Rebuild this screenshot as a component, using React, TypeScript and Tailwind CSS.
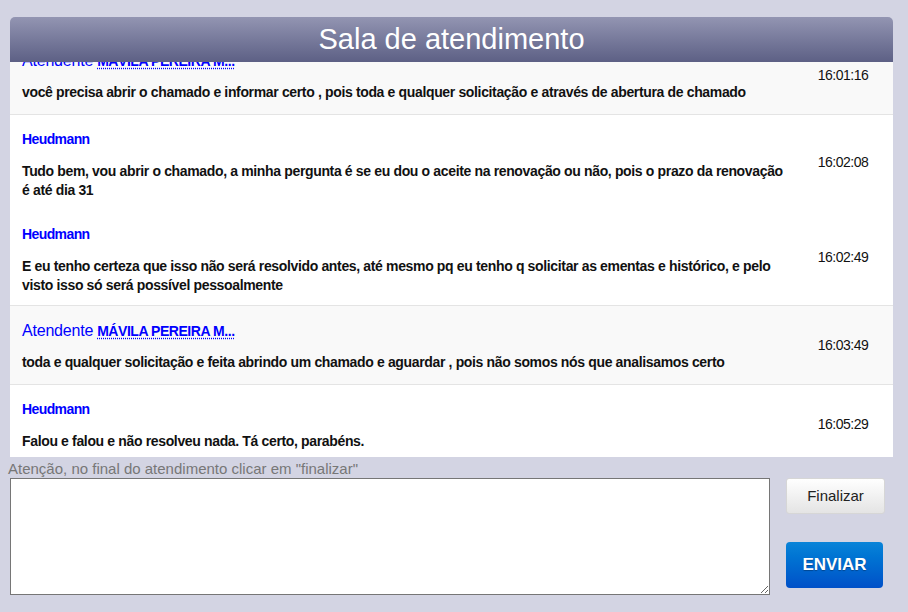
import React from "react";

type Msg = {
  who: string;
  agent?: string;
  text: string;
  time: string;
};

const groups: { shade: boolean; clip?: boolean; msgs: Msg[] }[] = [
  {
    shade: true,
    clip: true,
    msgs: [
      {
        who: "Atendente",
        agent: "MÁVILA PEREIRA M...",
        text: "você precisa abrir o chamado e informar certo , pois toda e qualquer solicitação e através de abertura de chamado",
        time: "16:01:16",
      },
    ],
  },
  {
    shade: false,
    msgs: [
      {
        who: "Heudmann",
        text: "Tudo bem, vou abrir o chamado, a minha pergunta é se eu dou o aceite na renovação ou não, pois o prazo da renovação é até dia 31",
        time: "16:02:08",
      },
      {
        who: "Heudmann",
        text: "E eu tenho certeza que isso não será resolvido antes, até mesmo pq eu tenho q solicitar as ementas e histórico, e pelo visto isso só será possível pessoalmente",
        time: "16:02:49",
      },
    ],
  },
  {
    shade: true,
    msgs: [
      {
        who: "Atendente",
        agent: "MÁVILA PEREIRA M...",
        text: "toda e qualquer solicitação e feita abrindo um chamado e aguardar , pois não somos nós que analisamos certo",
        time: "16:03:49",
      },
    ],
  },
  {
    shade: false,
    msgs: [
      {
        who: "Heudmann",
        text: "Falou e falou e não resolveu nada. Tá certo, parabéns.",
        time: "16:05:29",
      },
    ],
  },
];

const Row = ({ m }: { m: Msg }) => (
  <div className="flex min-h-[78px] items-stretch">
    <div className="flex-1 pl-[12px] pr-[4px] pt-[14px] pb-[10px]">
      {m.agent ? (
        <div className="flex h-[22px] items-center text-[#0000ff]">
          <span className="text-[16px] tracking-[-0.2px]">{m.who}</span>
          <span className="ml-[4px] text-[14px] font-bold tracking-[-0.45px] underline decoration-dotted underline-offset-2">
            {m.agent}
          </span>
        </div>
      ) : (
        <div className="flex h-[20px] items-center text-[14px] font-bold tracking-[-0.6px] text-[#0000ff]">
          {m.who}
        </div>
      )}
      <p
        className={`${m.agent ? "mt-[11px]" : "mt-[13px]"} text-[14px] font-bold leading-[19px] tracking-[-0.35px] text-[#111]`}
      >
        {m.text}
      </p>
    </div>
    <div className="flex w-[100px] shrink-0 items-center justify-center text-[14px] tracking-[-0.5px] text-[#111]">
      {m.time}
    </div>
  </div>
);

export default function App() {
  return (
    <div
      className="h-[612px] w-full overflow-hidden bg-[#d3d4e3] pt-[17px]"
      style={{ fontFamily: '"Liberation Sans", Arial, sans-serif' }}
    >
      <div className="ml-[10px] w-[883px]">
        <div className="flex h-[45px] items-center justify-center rounded-t-[5px] bg-gradient-to-b from-[#9395b2] to-[#5d6085] text-[29px] text-white">
          Sala de atendimento
        </div>
        <div className="h-[395px] overflow-hidden bg-white">
          {groups.map((g, i) => (
            <div
              key={i}
              className={`border-b border-[#e4e4e4] ${g.shade ? "bg-[#f9f9f9]" : "bg-white"} ${g.clip ? "-mt-[26px]" : ""}`}
            >
              {g.msgs.map((m, j) => (
                <Row key={j} m={m} />
              ))}
            </div>
          ))}
        </div>
      </div>

      <div className="pl-[8px] pt-[2px] text-[15px] leading-[19px] text-[#777]">
        Atenção, no final do atendimento clicar em "finalizar"
      </div>
      <div className="ml-[10px] flex">
        <textarea className="h-[117px] w-[760px] resize border border-[#767676] bg-white" />
        <div className="ml-[16px] flex flex-col">
          <button className="h-[36px] w-[99px] rounded-[3px] border border-[#d6d6d6] bg-gradient-to-b from-[#ffffff] to-[#e4e4e4] text-[15px] text-[#222]">
            Finalizar
          </button>
          <button className="mt-[28px] h-[46px] w-[97px] rounded-[4px] bg-gradient-to-b from-[#0a84d8] to-[#0050c8] text-[17px] font-bold text-white [text-shadow:0_1px_1px_rgba(0,0,0,0.3)]">
            ENVIAR
          </button>
        </div>
      </div>
    </div>
  );
}
